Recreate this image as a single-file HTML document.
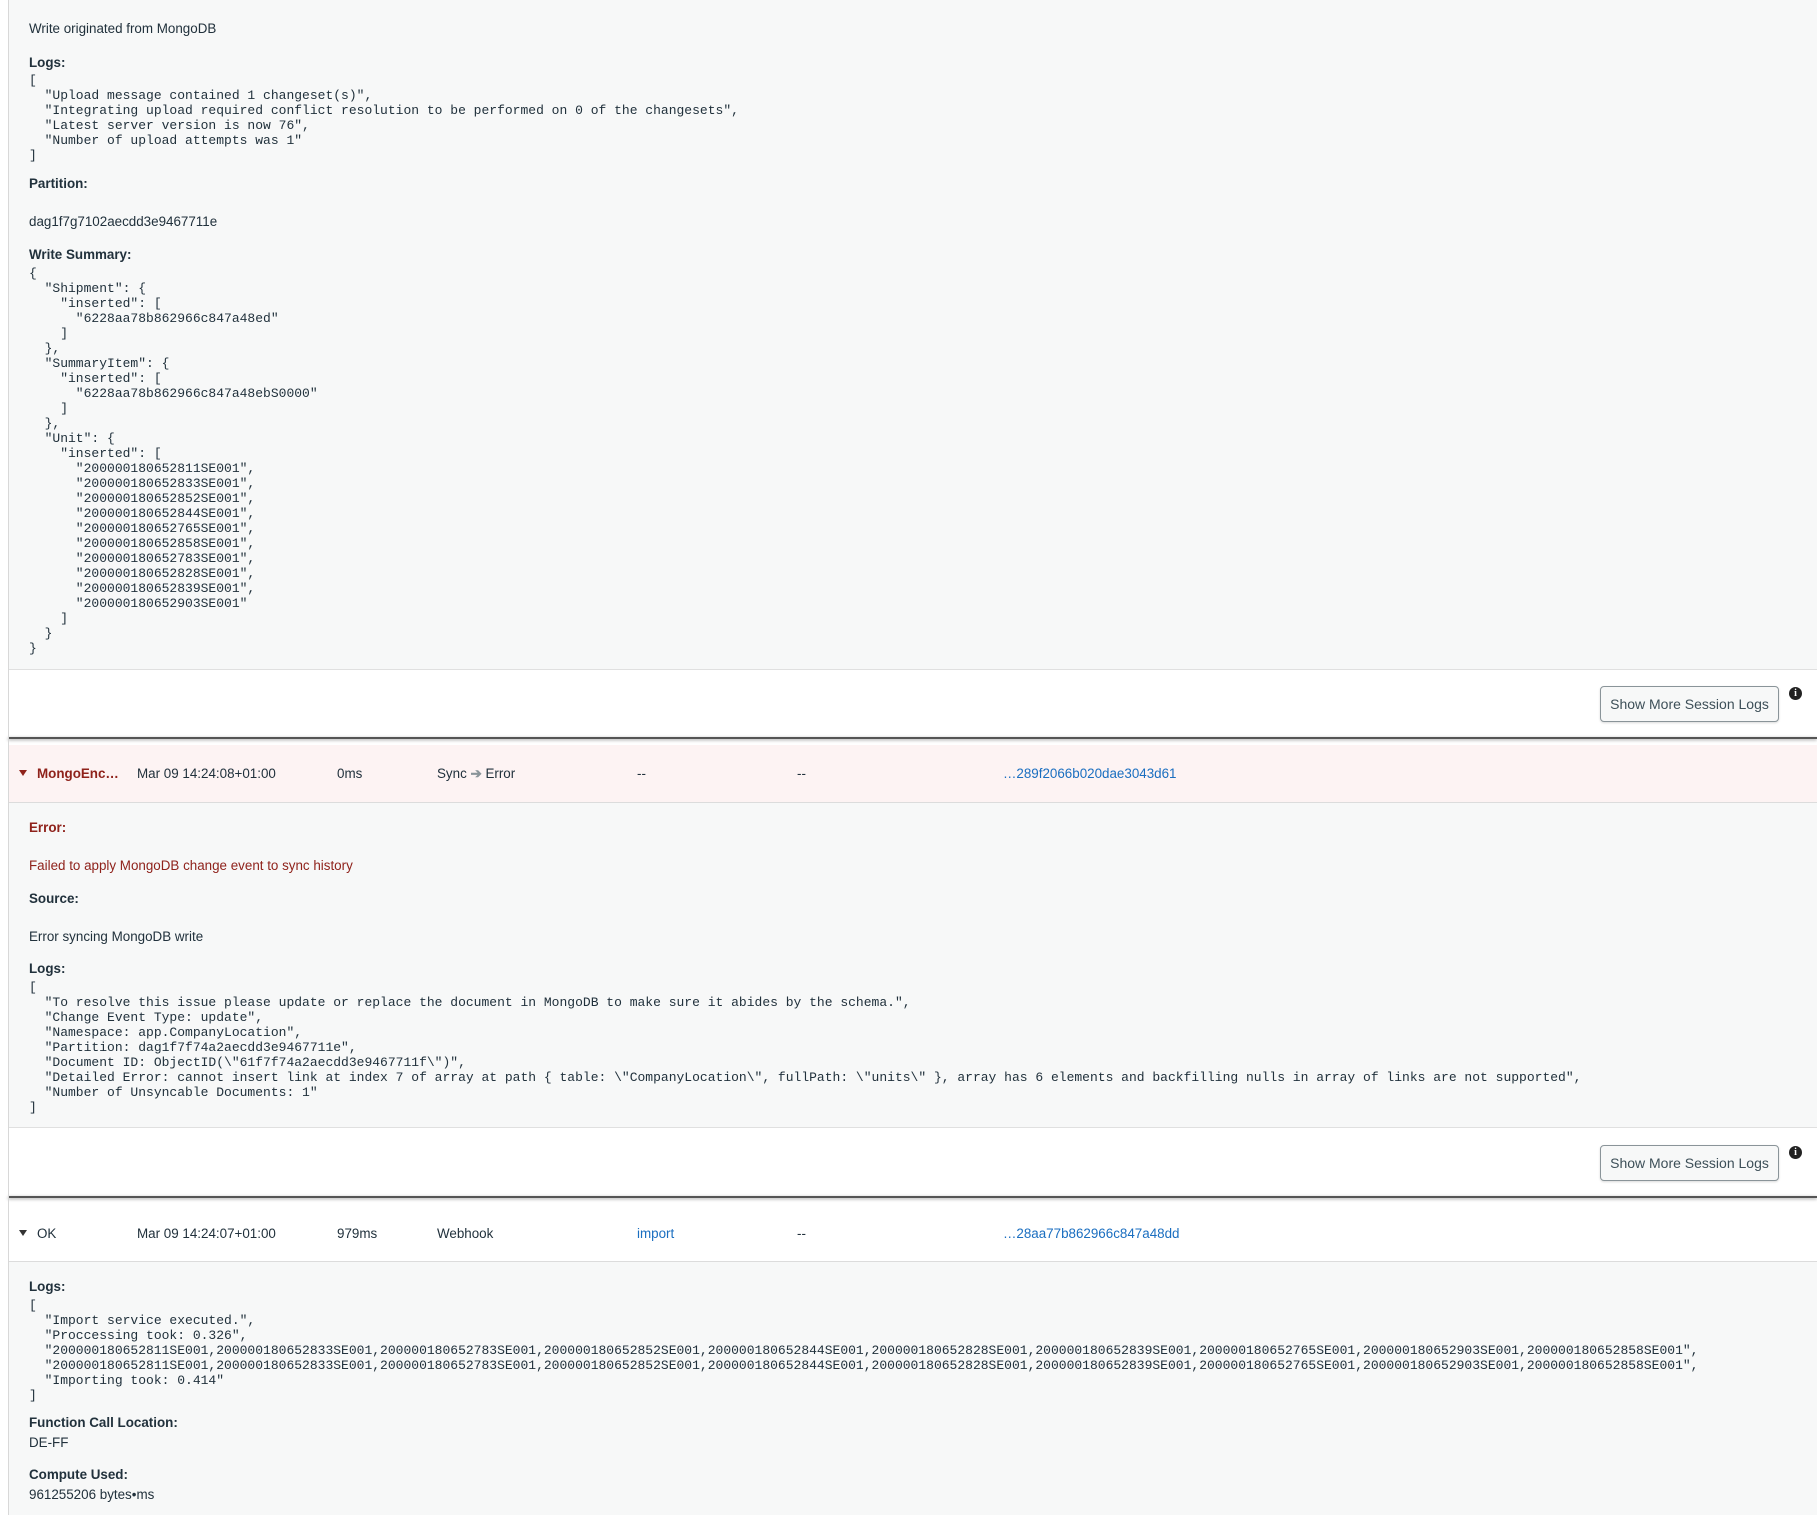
<!DOCTYPE html>
<html><head><meta charset="utf-8"><style>
html,body{margin:0;padding:0;width:1817px;height:1515px;overflow:hidden;background:#fff;position:relative;font-family:"Liberation Sans",Arial,sans-serif;color:#21313c;}
.b{position:absolute;left:8px;right:0;}
.g{background:#f7f8f8;}
.t{position:absolute;font-size:13.4px;line-height:17px;white-space:pre;}
.l{font-weight:bold;}
.m{position:absolute;font-family:"Liberation Mono",monospace;font-size:13px;line-height:15px;white-space:pre;color:#21313c;}
.btn{position:absolute;left:1600px;width:177px;height:34px;border:1px solid #8a9499;border-radius:4px;background:#f7f8f8;font-size:14px;line-height:34px;text-align:center;color:#3d4f58;box-shadow:0 1px 2px rgba(0,0,0,.15);}
.info{position:absolute;left:1789px;width:13px;height:13px;border-radius:50%;background:#222;color:#fff;font:bold 10px/13px "Liberation Serif",serif;text-align:center;}
.sh{position:absolute;left:8px;right:0;height:2px;background:#555;box-shadow:0 1px 3px rgba(0,0,0,.4);}
.red{color:#8f221b;}
.a{color:#1a6ec0;}
.tri{position:absolute;width:0;height:0;border-left:4px solid transparent;border-right:4px solid transparent;border-top:6px solid #333;}
</style></head><body>
<div style="position:absolute;left:8px;top:0;width:1px;height:1515px;background:#d8d8d8;z-index:5"></div>
<div class="b g" style="top:0;height:669px;border-bottom:1px solid #e0e0e0"></div>
<div class="t" style="left:29px;top:20px">Write originated from MongoDB</div>
<div class="t l" style="left:29px;top:54px">Logs:</div>
<div class="m" style="left:29px;top:73px">[
  "Upload message contained 1 changeset(s)",
  "Integrating upload required conflict resolution to be performed on 0 of the changesets",
  "Latest server version is now 76",
  "Number of upload attempts was 1"
]</div>
<div class="t l" style="left:29px;top:175px">Partition:</div>
<div class="t" style="left:29px;top:213px">dag1f7g7102aecdd3e9467711e</div>
<div class="t l" style="left:29px;top:246px">Write Summary:</div>
<div class="m" style="left:29px;top:266px">{
  "Shipment": {
    "inserted": [
      "6228aa78b862966c847a48ed"
    ]
  },
  "SummaryItem": {
    "inserted": [
      "6228aa78b862966c847a48ebS0000"
    ]
  },
  "Unit": {
    "inserted": [
      "200000180652811SE001",
      "200000180652833SE001",
      "200000180652852SE001",
      "200000180652844SE001",
      "200000180652765SE001",
      "200000180652858SE001",
      "200000180652783SE001",
      "200000180652828SE001",
      "200000180652839SE001",
      "200000180652903SE001"
    ]
  }
}</div>
<div class="btn" style="top:686px">Show More Session Logs</div>
<div class="info" style="top:687px">i</div>
<div class="sh" style="top:737px"></div>

<div class="b" style="top:745px;height:57px;background:#fdf3f3;border-bottom:1px solid #dcdcdc"></div>
<div class="tri" style="left:19px;top:770px;border-top-color:#8f221b"></div>
<div class="t l red" style="left:37px;top:765px">MongoEnc…</div>
<div class="t" style="left:137px;top:765px">Mar 09 14:24:08+01:00</div>
<div class="t" style="left:337px;top:765px">0ms</div>
<div class="t" style="left:437px;top:765px">Sync <b style="color:#8a9499">➔</b> Error</div>
<div class="t" style="left:637px;top:765px">--</div>
<div class="t" style="left:797px;top:765px">--</div>
<div class="t a" style="left:1003px;top:765px">…289f2066b020dae3043d61</div>
<div class="b g" style="top:803px;height:324px;border-bottom:1px solid #e0e0e0"></div>
<div class="t l red" style="left:29px;top:819px">Error:</div>
<div class="t red" style="left:29px;top:857px">Failed to apply MongoDB change event to sync history</div>
<div class="t l" style="left:29px;top:890px">Source:</div>
<div class="t" style="left:29px;top:928px">Error syncing MongoDB write</div>
<div class="t l" style="left:29px;top:960px">Logs:</div>
<div class="m" style="left:29px;top:980px">[
  "To resolve this issue please update or replace the document in MongoDB to make sure it abides by the schema.",
  "Change Event Type: update",
  "Namespace: app.CompanyLocation",
  "Partition: dag1f7f74a2aecdd3e9467711e",
  "Document ID: ObjectID(\"61f7f74a2aecdd3e9467711f\")",
  "Detailed Error: cannot insert link at index 7 of array at path { table: \"CompanyLocation\", fullPath: \"units\" }, array has 6 elements and backfilling nulls in array of links are not supported",
  "Number of Unsyncable Documents: 1"
]</div>
<div class="btn" style="top:1145px">Show More Session Logs</div>
<div class="info" style="top:1146px">i</div>
<div class="sh" style="top:1196px"></div>

<div class="b" style="top:1204px;height:57px;background:#fff;border-bottom:1px solid #dcdcdc"></div>
<div class="tri" style="left:19px;top:1230px"></div>
<div class="t" style="left:37px;top:1225px">OK</div>
<div class="t" style="left:137px;top:1225px">Mar 09 14:24:07+01:00</div>
<div class="t" style="left:337px;top:1225px">979ms</div>
<div class="t" style="left:437px;top:1225px">Webhook</div>
<div class="t a" style="left:637px;top:1225px">import</div>
<div class="t" style="left:797px;top:1225px">--</div>
<div class="t a" style="left:1003px;top:1225px">…28aa77b862966c847a48dd</div>
<div class="b g" style="top:1262px;height:253px"></div>
<div class="t l" style="left:29px;top:1278px">Logs:</div>
<div class="m" style="left:29px;top:1298px">[
  "Import service executed.",
  "Proccessing took: 0.326",
  "200000180652811SE001,200000180652833SE001,200000180652783SE001,200000180652852SE001,200000180652844SE001,200000180652828SE001,200000180652839SE001,200000180652765SE001,200000180652903SE001,200000180652858SE001",
  "200000180652811SE001,200000180652833SE001,200000180652783SE001,200000180652852SE001,200000180652844SE001,200000180652828SE001,200000180652839SE001,200000180652765SE001,200000180652903SE001,200000180652858SE001",
  "Importing took: 0.414"
]</div>
<div class="t l" style="left:29px;top:1414px">Function Call Location:</div>
<div class="t" style="left:29px;top:1434px">DE-FF</div>
<div class="t l" style="left:29px;top:1466px">Compute Used:</div>
<div class="t" style="left:29px;top:1486px">961255206 bytes•ms</div>
</body></html>
